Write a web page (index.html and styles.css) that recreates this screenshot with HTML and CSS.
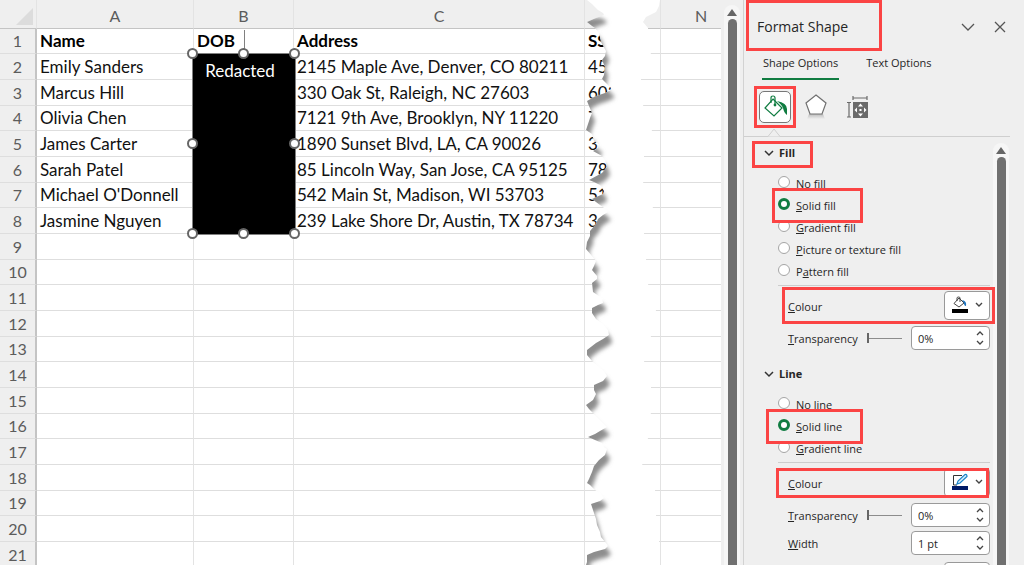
FILE: index.html
```html
<!DOCTYPE html>
<html lang="en">
<head>
    <meta charset="UTF-8">
    <meta name="viewport" content="width=device-width, initial-scale=1.0">
    <title>Format Shape</title>
    <link rel="stylesheet" href="styles.css">
</head>
<body>
    <main class="sheet">
        <table class="grid">
            <colgroup>
                <col class="col-num">
                <col class="col-a">
                <col class="col-b">
                <col class="col-c">
                <col class="col-d">
                <col>
            </colgroup>
            <thead>
                <tr>
                    <th class="corner"><svg width="17" height="17" viewBox="0 0 17 17"><path d="M17 0V17H0Z" fill="#dcdcdc"/></svg></th>
                    <th>A</th>
                    <th>B</th>
                    <th>C</th>
                    <th></th>
                    <th class="col-n">N</th>
                </tr>
            </thead>
            <tbody>
                <tr class="titles"><th>1</th><td>Name</td><td>DOB</td><td>Address</td><td>SSN</td><td></td></tr>
                <tr><th>2</th><td>Emily Sanders</td><td></td><td>2145 Maple Ave, Denver, CO 80211</td><td>457</td><td></td></tr>
                <tr><th>3</th><td>Marcus Hill</td><td></td><td>330 Oak St, Raleigh, NC 27603</td><td>603</td><td></td></tr>
                <tr><th>4</th><td>Olivia Chen</td><td></td><td>7121 9th Ave, Brooklyn, NY 11220</td><td>7</td><td></td></tr>
                <tr><th>5</th><td>James Carter</td><td></td><td>1890 Sunset Blvd, LA, CA 90026</td><td>39</td><td></td></tr>
                <tr><th>6</th><td>Sarah Patel</td><td></td><td>85 Lincoln Way, San Jose, CA 95125</td><td>78</td><td></td></tr>
                <tr><th>7</th><td>Michael O'Donnell</td><td></td><td>542 Main St, Madison, WI 53703</td><td>51</td><td></td></tr>
                <tr><th>8</th><td>Jasmine Nguyen</td><td></td><td>239 Lake Shore Dr, Austin, TX 78734</td><td>3</td><td></td></tr>
                <tr><th>9</th><td></td><td></td><td></td><td></td><td></td></tr>
                <tr><th>10</th><td></td><td></td><td></td><td></td><td></td></tr>
                <tr><th>11</th><td></td><td></td><td></td><td></td><td></td></tr>
                <tr><th>12</th><td></td><td></td><td></td><td></td><td></td></tr>
                <tr><th>13</th><td></td><td></td><td></td><td></td><td></td></tr>
                <tr><th>14</th><td></td><td></td><td></td><td></td><td></td></tr>
                <tr><th>15</th><td></td><td></td><td></td><td></td><td></td></tr>
                <tr><th>16</th><td></td><td></td><td></td><td></td><td></td></tr>
                <tr><th>17</th><td></td><td></td><td></td><td></td><td></td></tr>
                <tr><th>18</th><td></td><td></td><td></td><td></td><td></td></tr>
                <tr><th>19</th><td></td><td></td><td></td><td></td><td></td></tr>
                <tr><th>20</th><td></td><td></td><td></td><td></td><td></td></tr>
                <tr><th>21</th><td></td><td></td><td></td><td></td><td></td></tr>
            </tbody>
        </table>

        <!-- torn strip between columns C and N -->
        <svg class="tear" width="80" height="565" viewBox="584 0 80 565">
            <defs>
                <clipPath id="gap">
                    <path d="M587 0L592 4L598 10L603 13L604 15L596 18L587 22L592 26L595 28L599 33L601 42L606 51L605 56L602 60L605 67L604 75L602 79L606 83L611 88L611 90L605 93L596 96L587 101L589 106L592 113L590 118L588 124L586 130L592 134L594 141L599 144L598 148L593 151L602 156L605 160L607 167L602 173L589 180L594 182L600 185L604 191L603 194L592 199L596 202L604 208L608 212L603 215L598 219L596 224L590 231L590 236L587 242L586 249L592 256L596 261L594 266L592 270L597 276L597 279L592 283L593 292L602 298L603 303L598 305L592 308L592 313L596 319L603 324L608 330L609 335L603 339L596 343L587 350L587 355L592 361L598 366L604 371L607 376L603 381L594 385L594 390L596 394L593 400L586 405L589 409L595 415L601 421L607 427L600 431L595 434L588 437L595 440L602 443L604 447L607 449L605 455L599 460L594 466L592 472L589 479L587 483L590 485L595 490L601 494L604 498L600 501L591 504L593 510L596 519L597 525L600 532L601 537L606 543L608 546L605 549L594 552L587 555L587 562L586 565H659L659 541L656 515L655 489L642 464L648 438L651 412L651 387L644 361L651 336L656 310L648 284L646 259L644 233L653 207L643 182L644 156L652 130L643 105L641 79L651 53L648 28L643 22L646 17L656 12L659 6L660 0Z"/>
                </clipPath>
                <filter id="soft" x="-20%" y="-5%" width="160%" height="110%">
                    <feGaussianBlur stdDeviation="2"/>
                </filter>
            </defs>
            <g clip-path="url(#gap)">
                <rect x="584" y="0" width="80" height="565" fill="#fff"/>
                <path filter="url(#soft)" transform="translate(3 8)" fill="#8e8e8e" d="M560 10L598 10L603 13L604 15L596 18L587 22L592 26L595 28L599 33L601 42L606 51L605 56L602 60L605 67L604 75L602 79L606 83L611 88L611 90L605 93L596 96L587 101L589 106L592 113L590 118L588 124L586 130L592 134L594 141L599 144L598 148L593 151L602 156L605 160L607 167L602 173L589 180L594 182L600 185L604 191L603 194L592 199L596 202L604 208L608 212L603 215L598 219L596 224L590 231L590 236L587 242L586 249L592 256L596 261L594 266L592 270L597 276L597 279L592 283L593 292L602 298L603 303L598 305L592 308L592 313L596 319L603 324L608 330L609 335L603 339L596 343L587 350L587 355L592 361L598 366L604 371L607 376L603 381L594 385L594 390L596 394L593 400L586 405L589 409L595 415L601 421L607 427L600 431L595 434L588 437L595 440L602 443L604 447L607 449L605 455L599 460L594 466L592 472L589 479L587 483L590 485L595 490L601 494L604 498L600 501L591 504L593 510L596 519L597 525L600 532L601 537L606 543L608 546L605 549L594 552L587 555L587 562L586 570H560Z"/>
            </g>
        </svg>

        <div class="shape">
            <span class="stem"></span>
            Redacted
            <i class="handle nw"></i><i class="handle n"></i><i class="handle ne"></i>
            <i class="handle w"></i><i class="handle e"></i>
            <i class="handle sw"></i><i class="handle s"></i><i class="handle se"></i>
        </div>

        <div class="scrollbar"><span class="up"></span><span class="thumb"></span></div>
    </main>

    <aside class="pane">
        <header class="pane-head">
            <h1 class="mark">Format Shape</h1>
            <button type="button" aria-label="Pane options"><svg width="16" height="16" viewBox="0 0 16 16"><path d="M2 5L8 11L14 5" fill="none" stroke="#555" stroke-width="1.3"/></svg></button>
            <button type="button" aria-label="Close"><svg width="16" height="16" viewBox="0 0 16 16"><path d="M3 3L13 13M13 3L3 13" fill="none" stroke="#555" stroke-width="1.3"/></svg></button>
        </header>

        <nav class="tabs">
            <button type="button" class="active">Shape Options</button>
            <button type="button">Text Options</button>
        </nav>

        <div class="tools">
            <button type="button" class="tool selected mark" aria-label="Fill and line">
                <svg width="26" height="26" viewBox="0 0 26 26">
                    <path d="M11 5L20 14L12 22L3 14Z" fill="#fff" stroke="#107c41" stroke-width="1.2"/>
                    <path d="M9 9V4Q9 2 11 2T13 4V11" fill="none" stroke="#107c41" stroke-width="1.2"/>
                    <circle cx="13" cy="11" r="1.4" fill="#107c41"/>
                    <path d="M15 7Q25 9 25 15V21Q22 19 21 14Q20 11 15 7Z" fill="#107c41"/>
                </svg>
            </button>
            <button type="button" class="tool" aria-label="Effects">
                <svg width="24" height="26" viewBox="0 0 24 26">
                    <defs><linearGradient id="fade" x2="0" y2="1"><stop stop-color="#bbb"/><stop offset="1" stop-color="#efefef"/></linearGradient></defs>
                    <path d="M5 20H19L21 25H3Z" fill="url(#fade)"/>
                    <path d="M12 1L22 9L18 20H6L2 9Z" fill="#fff" stroke="#707070" stroke-width="1.2"/>
                </svg>
            </button>
            <button type="button" class="tool" aria-label="Size and properties">
                <svg width="24" height="24" viewBox="0 0 24 24">
                    <path d="M8 3H22M8 1V5M22 1V5M4 8V22M2 7.500H6M2 22H6" fill="none" stroke="#6a6a6a" stroke-width="1.2"/>
                    <rect x="8" y="7" width="15" height="16" fill="#6a6a6a"/>
                    <path d="M15.500 8.500L18 11.500H13ZM15.500 21.500L18 18.500H13ZM9.500 15L12 12.500V17.500ZM21.500 15L19 12.500V17.500ZM14.500 14H16.500V16H14.500Z" fill="#fff"/>
                </svg>
            </button>
        </div>
        <svg class="notch" width="12" height="9" viewBox="0 0 12 9"><path d="M0 8.500L6 1L12 8.500" fill="#efefef" stroke="#cfcfcf"/></svg>

        <div class="pane-body">
            <form class="options">
                <section>
                    <h2><span class="mark"><svg width="10" height="8" viewBox="0 0 10 8"><path d="M1 2L5 6L9 2" fill="none" stroke="#333" stroke-width="1.5"/></svg>Fill</span></h2>
                    <div class="radios">
                        <label><input type="radio" name="fill"><span><u>N</u>o fill</span></label>
                        <label class="mark"><input type="radio" name="fill" checked><span><u>S</u>olid fill</span></label>
                        <label><input type="radio" name="fill"><span><u>G</u>radient fill</span></label>
                        <label><input type="radio" name="fill"><span><u>P</u>icture or texture fill</span></label>
                        <label><input type="radio" name="fill"><span>P<u>a</u>ttern fill</span></label>
                    </div>
                    <div class="row colour mark fill-colour">
                        <label for="fill-colour"><u>C</u>olour</label>
                        <button type="button" id="fill-colour" class="picker">
                            <svg width="18" height="18" viewBox="0 0 18 18">
                                <path d="M8 2L13 7L8 11L3 7.500Z" fill="#fff" stroke="#444"/>
                                <path d="M6 5V2Q6 1 7.500 1T9 2V6" fill="none" stroke="#444"/>
                                <path d="M11 4Q16 5 15 10Q13 10 13 7Z" fill="#1b74c0"/>
                                <rect x="1" y="13" width="16" height="4" fill="#000"/>
                            </svg>
                            <svg width="8" height="6" viewBox="0 0 8 6"><path d="M1 1L4 4L7 1" fill="none" stroke="#444" stroke-width="1.400"/></svg>
                        </button>
                    </div>
                    <div class="row">
                        <label for="fill-alpha"><u>T</u>ransparency</label>
                        <input type="range" min="0" max="100" value="0" aria-label="Fill transparency">
                        <span class="spin"><input type="text" id="fill-alpha" value="0%"><svg width="8" height="16" viewBox="0 0 8 16"><path d="M1 5L4 2L7 5M1 11L4 14L7 11" fill="none" stroke="#444" stroke-width="1.300"/></svg></span>
                    </div>
                </section>

                <section class="line">
                    <h2><span><svg width="10" height="8" viewBox="0 0 10 8"><path d="M1 2L5 6L9 2" fill="none" stroke="#333" stroke-width="1.5"/></svg>Line</span></h2>
                    <div class="radios">
                        <label><input type="radio" name="line"><span><u>N</u>o line</span></label>
                        <label class="mark"><input type="radio" name="line" checked><span><u>S</u>olid line</span></label>
                        <label><input type="radio" name="line"><span><u>G</u>radient line</span></label>
                    </div>
                    <div class="row colour mark line-colour">
                        <label for="line-colour"><u>C</u>olour</label>
                        <button type="button" id="line-colour" class="picker">
                            <svg width="18" height="18" viewBox="0 0 18 18">
                                <path d="M11 2.500H2.500V12H6" fill="none" stroke="#333"/>
                                <path d="M6 11L7 8L14 1.500Q16 1 16 3.500L9 10Z" fill="#d8ecfa" stroke="#1b84c8" stroke-width="1.200"/>
                                <rect x="1" y="13" width="16" height="4" fill="#001a66"/>
                            </svg>
                            <svg width="8" height="6" viewBox="0 0 8 6"><path d="M1 1L4 4L7 1" fill="none" stroke="#444" stroke-width="1.400"/></svg>
                        </button>
                    </div>
                    <div class="row">
                        <label for="line-alpha"><u>T</u>ransparency</label>
                        <input type="range" min="0" max="100" value="0" aria-label="Line transparency">
                        <span class="spin"><input type="text" id="line-alpha" value="0%"><svg width="8" height="16" viewBox="0 0 8 16"><path d="M1 5L4 2L7 5M1 11L4 14L7 11" fill="none" stroke="#444" stroke-width="1.300"/></svg></span>
                    </div>
                    <div class="row">
                        <label for="line-width"><u>W</u>idth</label>
                        <span class="spin"><input type="text" id="line-width" value="1 pt"><svg width="8" height="16" viewBox="0 0 8 16"><path d="M1 5L4 2L7 5M1 11L4 14L7 11" fill="none" stroke="#444" stroke-width="1.300"/></svg></span>
                    </div>
                    <div class="row colour">
                        <button type="button" class="picker" aria-label="Compound type"></button>
                    </div>
                </section>
            </form>
            <div class="scrollbar"><span class="up"></span><span class="thumb"></span></div>
        </div>
    </aside>
</body>
</html>
```

FILE: styles.css
```css
*,
*::after {
    box-sizing: border-box;
}
body {
    margin: 0;
    height: 100vh;
    display: flex;
    overflow: hidden;
    background: #efefef;
    color: #262626;
    font-family: "Open Sans", "Noto Sans", sans-serif;
    font-size: 11px;
}
button {
    padding: 0;
    border: 0;
    background: none;
    color: inherit;
    font: inherit;
}
svg {
    display: block;
}

/* Red call-out boxes */
.mark {
    position: relative;
}
.mark::after {
    content: "";
    position: absolute;
    z-index: 2;
    border: 3px solid #fb4444;
    pointer-events: none;
}

/* Worksheet */
.sheet {
    position: relative;
    flex: 1;
    min-width: 0;
    display: flex;
    overflow: hidden;
    font-family: Lato, Carlito, sans-serif;
    font-size: 17px;
}
.grid {
    flex: 1;
    align-self: flex-start;
    table-layout: fixed;
    width: 100%;
    border-collapse: separate;
    border-spacing: 0;
    background: #fff;
    color: #111;
}
.col-num { width: 37px; }
.col-a { width: 157px; }
.col-b { width: 100px; }
.col-c { width: 291px; }
.col-d { width: 76px; }
.grid th,
.grid td {
    padding: 0 0 0 3px;
    overflow: hidden;
    white-space: nowrap;
    line-height: 24px;
    border-right: 1px solid #e3e3e3;
    border-bottom: 1px solid #dedede;
}
.grid td {
    text-align: left;
}
.grid th {
    padding: 0;
    background: #efefef;
    color: #5c5c5c;
    font-size: 16px;
    font-weight: 400;
}
.grid thead th {
    height: 29px;
    padding-top: 4px;
    border-bottom-color: #c4c4c4;
}
.grid thead th.col-n {
    padding-left: 20px;
}
.grid tbody th {
    border-right: 2px solid #c4c4c4;
}
.grid tbody tr {
    height: 26px;
}
.grid tbody tr:nth-child(3n + 1) {
    height: 25px;
}
.grid tr > :last-child {
    border-right: 0;
}
.titles td {
    font-weight: 700;
    color: #000;
}
.corner svg {
    margin-left: 16px;
}
.tear {
    position: absolute;
    left: 584px;
    top: 0;
}

/* Drawn rectangle with its resize handles */
.shape {
    position: absolute;
    left: 192px;
    top: 53px;
    width: 104px;
    height: 182px;
    padding: 5px 8px 0 0;
    border: 1px solid #808080;
    background: #000;
    color: #fff;
    line-height: 24px;
    text-align: center;
}
.stem {
    position: absolute;
    left: 50%;
    bottom: 100%;
    width: 1px;
    height: 24px;
    background: #808080;
}
.handle {
    position: absolute;
    width: 11px;
    height: 11px;
    margin: -6px;
    border: 2px solid #666;
    border-radius: 50%;
    background: #fff;
}
.nw, .n, .ne { top: 0; }
.w, .e { top: 50%; }
.sw, .s, .se { top: 100%; }
.nw, .w, .sw { left: 0; }
.n, .s { left: 50%; }
.ne, .e, .se { left: 100%; }

/* Scroll bars */
.scrollbar {
    flex: none;
    display: flex;
    flex-direction: column;
    align-items: center;
    gap: 3px;
    width: 16px;
    padding-top: 4px;
    border-radius: 8px 8px 0 0;
    background: #f6f6f6;
}
.up {
    border: 5px solid transparent;
    border-top: 0;
    border-bottom: 7px solid #666;
}
.thumb {
    flex: 1;
    width: 9px;
    border-radius: 5px 5px 0 0;
    background: #707070;
}
.sheet > .scrollbar {
    margin: 5px 3px 0;
}

/* Format pane */
.pane {
    flex: none;
    width: 281px;
    display: flex;
    flex-direction: column;
    border-left: 1px solid #d2d2d2;
}
.pane-head {
    display: flex;
    align-items: center;
    height: 54px;
    padding: 0 16px 0 13px;
    gap: 16px;
}
.pane-head h1 {
    flex: 1;
    margin: 0;
    font-size: 14px;
    font-weight: 500;
    line-height: 20px;
}
.pane-head h1::after {
    left: -11px;
    top: -17px;
    width: 136px;
    height: 51px;
}
.tabs {
    display: flex;
    gap: 26px;
    padding: 0 18px;
}
.tabs button {
    height: 26px;
    padding: 0 1px 6px;
    border-bottom: 2px solid transparent;
    line-height: 16px;
}
.tabs .active {
    border-color: #107c41;
    font-weight: 500;
}
.tools {
    display: flex;
    align-items: center;
    gap: 9px;
    height: 57px;
    padding: 0 15px 2px;
    margin-right: 14px;
    border-bottom: 1px solid #cfcfcf;
}
.tool {
    display: flex;
    align-items: center;
    justify-content: center;
    width: 32px;
    height: 32px;
}
.tool.selected {
    border: 1px solid #777;
    border-radius: 5px;
    background: #fff;
}
.tool::after {
    inset: -6px;
}
.notch {
    margin: -9px 0 0 24px;
}
.pane-body {
    flex: 1;
    min-height: 0;
    display: flex;
    justify-content: space-between;
    padding-right: 15px;
    overflow: hidden;
}
.pane-body .scrollbar {
    margin-top: 6px;
}
.options {
    flex: 1;
    min-width: 0;
    padding-left: 20px;
    padding-right: 3px;
}
h2 {
    height: 32px;
    margin: 0 0 2px;
    font-size: 11px;
    line-height: 32px;
}
h2 span {
    display: inline-flex;
    align-items: center;
    gap: 5px;
}
h2 .mark::after {
    inset: 4px -18px 1px -12px;
}
.radios {
    padding: 0 0 4px 14px;
}
.radios label {
    display: flex;
    align-items: center;
    gap: 6px;
    height: 22px;
}
.radios span {
    padding-top: 2px;
}
.radios .mark::after {
    left: -6px;
    top: -5px;
    width: 91px;
    height: 35px;
}
.line .radios .mark::after {
    left: -12px;
    width: 97px;
}
input[type="radio"] {
    appearance: none;
    width: 12px;
    height: 12px;
    margin: 0;
    border: 1px solid #a5a5a5;
    border-radius: 50%;
    background: #fff;
}
input[type="radio"]:checked {
    border: 3px solid #107c41;
}
.row {
    display: flex;
    align-items: center;
    gap: 9px;
    height: 28px;
    padding-left: 24px;
}
.colour {
    height: 39px;
    justify-content: space-between;
    margin-left: 14px;
    padding-left: 10px;
}
.colour label {
    padding-top: 2px;
}
.colour.mark {
    border-top: 1px solid #cdcdcd;
}
.fill-colour::after {
    inset: 1px -5px 0 4px;
}
.line-colour::after {
    inset: 5px 1px 3px -2px;
}
.picker {
    display: flex;
    align-items: center;
    justify-content: center;
    gap: 6px;
    width: 46px;
    height: 29px;
    margin-left: auto;
    border: 1px solid #999;
    border-radius: 4px;
    background: #fff;
}
.spin {
    flex: none;
    display: flex;
    align-items: center;
    width: 79px;
    height: 24px;
    margin-left: auto;
    padding-right: 5px;
    border: 1px solid #9a9a9a;
    border-radius: 4px;
    background: #fff;
}
.spin input {
    flex: 1;
    min-width: 0;
    padding: 0 0 0 6px;
    border: 0;
    background: none;
    color: inherit;
    font: inherit;
}
input[type="range"] {
    appearance: none;
    flex: 0 1 36px;
    min-width: 0;
    height: 10px;
    margin: 0;
    background: linear-gradient(#8c8c8c, #8c8c8c) center / 100% 1px no-repeat;
}
input[type="range"]::-webkit-slider-thumb {
    appearance: none;
    width: 2px;
    height: 10px;
    background: #666;
}
section.line {
    padding-top: 6px;
}
```
